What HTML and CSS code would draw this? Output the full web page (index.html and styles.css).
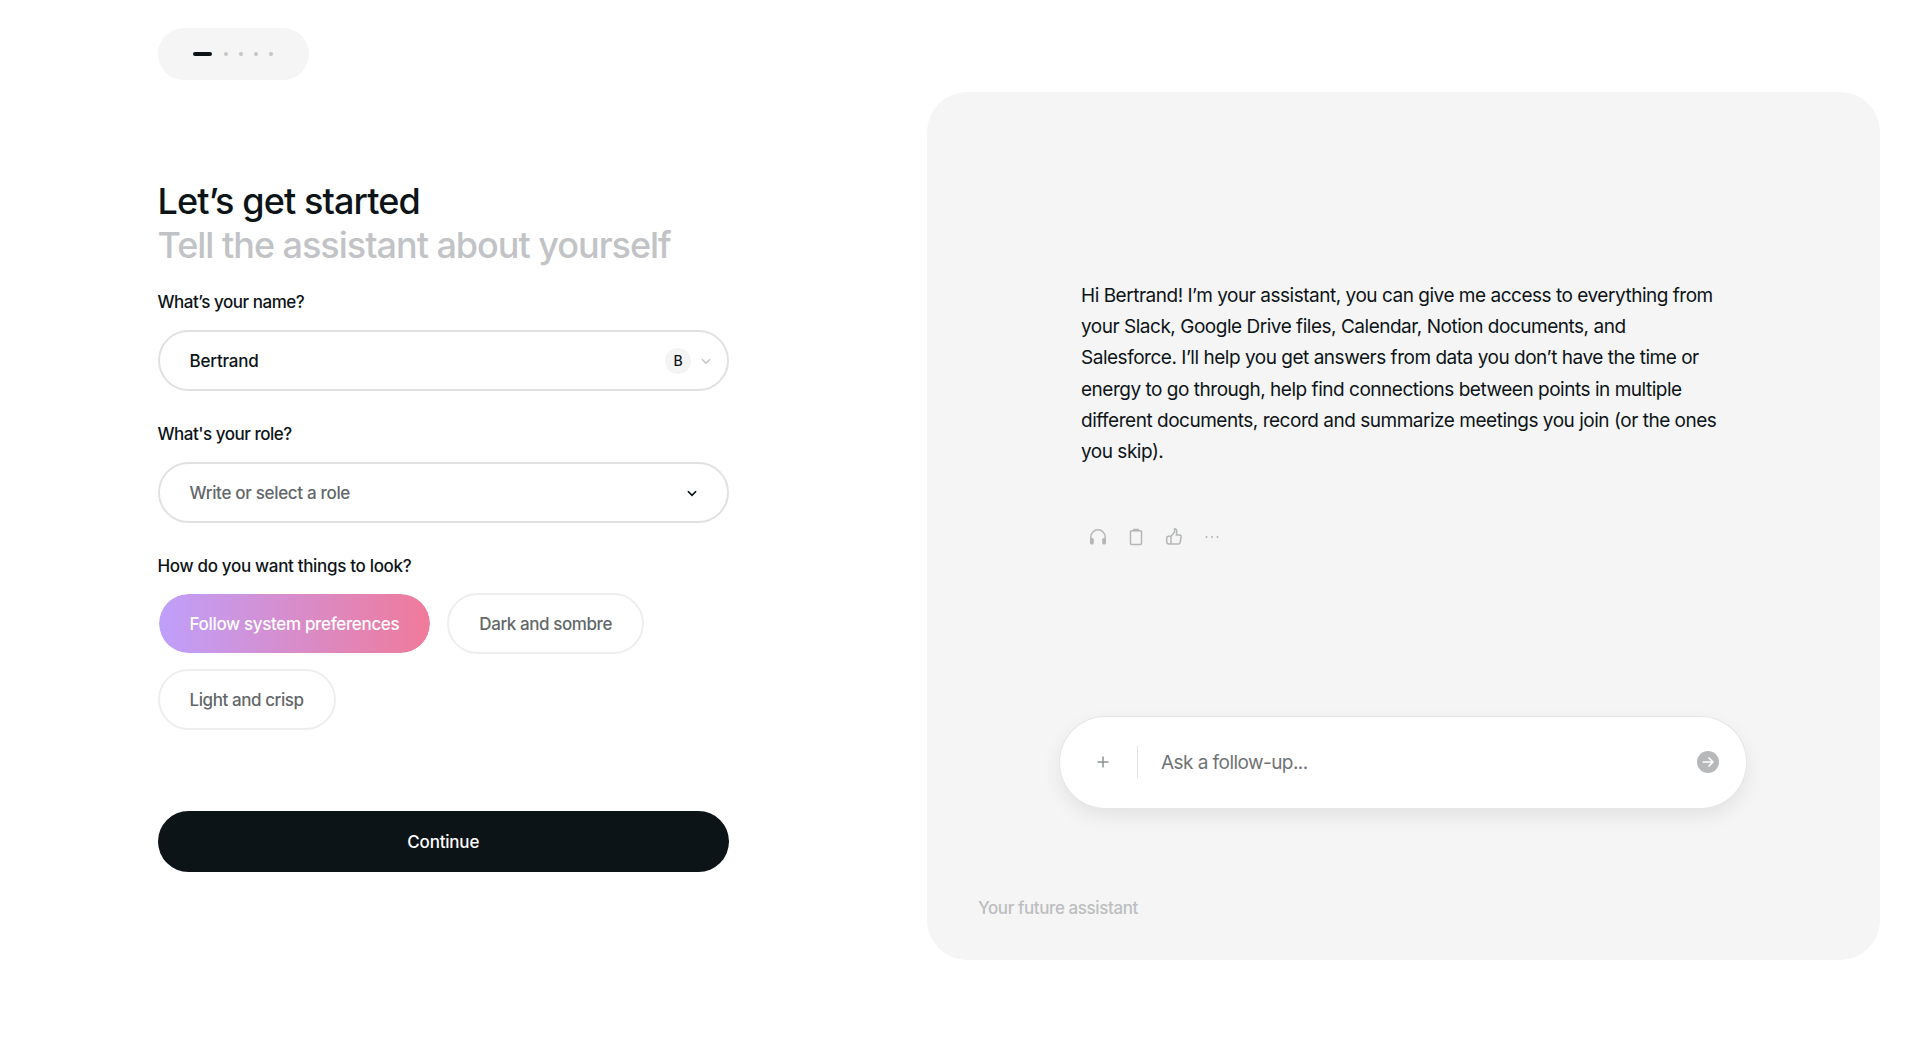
FILE: index.html
```html
<!DOCTYPE html>
<html lang="en">
<head>
<meta charset="utf-8">
<title>Let's get started</title>
<link rel="stylesheet" href="styles.css">
</head>
<body>
<main class="page">
  <section class="form-col">
    <div class="stepper">
      <span class="step-dash"></span>
      <span class="step-dot"></span>
      <span class="step-dot"></span>
      <span class="step-dot"></span>
      <span class="step-dot"></span>
    </div>
    <h1 class="title">Let’s get started</h1>
    <p class="subtitle">Tell the assistant about yourself</p>
    <label class="label label-first">What’s your name?</label>
    <div class="field">
      <span class="field-value">Bertrand</span>
      <span class="avatar">B</span>
      <svg class="chev-light" viewBox="0 0 12 12"><path d="M2.5 4.5 6 8l3.5-3.5"/></svg>
    </div>
    <label class="label">What's your role?</label>
    <div class="field field-role">
      <span class="field-placeholder">Write or select a role</span>
      <svg class="chev-dark" viewBox="0 0 12 12"><path d="M2.5 4.5 6 8l3.5-3.5"/></svg>
    </div>
    <label class="label label-look">How do you want things to look?</label>
    <div class="chips">
      <span class="chip chip-active">Follow system preferences</span>
      <span class="chip">Dark and sombre</span>
      <span class="chip">Light and crisp</span>
    </div>
    <button class="continue">Continue</button>
  </section>
  <section class="panel">
    <p class="message">Hi Bertrand! I’m your assistant, you can give me access to everything from your Slack, Google Drive files, Calendar, Notion documents, and Salesforce. I’ll help you get answers from data you don’t have the time or energy to go through, help find connections between points in multiple different documents, record and summarize meetings you join (or the ones you skip).</p>
    <div class="actions">
      <svg class="act" viewBox="0 0 20 20"><path d="M2.800 12.500V10a7.200 7.200 0 0 1 14.400 0v2.500"/><rect class="fill" x="2" y="11" width="3.800" height="6.500" rx="1.600"/><rect class="fill" x="14.200" y="11" width="3.800" height="6.500" rx="1.600"/></svg>
      <svg class="act" viewBox="0 0 20 20"><rect x="4.500" y="3.800" width="11" height="13.700" rx="1.200"/><path d="M7.800 3.800V2.400h4.400v1.400"/></svg>
      <svg class="act" viewBox="0 0 20 20"><path d="M7 9.200 10.600 5V1.800c1.400 0 2.400 1 2.200 2.600L12.400 8h3.400c.9 0 1.500.8 1.300 1.600l-1 6c-.2.800-.8 1.300-1.600 1.300H7z"/><path d="M7 9.200H4.800C3.600 9.200 2.700 10.200 2.700 11.400v3c0 1.400 1 2.500 2.300 2.500H7"/></svg>
      <svg class="act" viewBox="0 0 20 20"><circle class="fill" cx="4.500" cy="10" r="1"/><circle class="fill" cx="10" cy="10" r="1"/><circle class="fill" cx="15.500" cy="10" r="1"/></svg>
    </div>
    <div class="composer">
      <svg class="plus" viewBox="0 0 14 14"><path d="M7 1.500v11M1.500 7h11"/></svg>
      <span class="divider"></span>
      <span class="composer-text">Ask a follow-up...</span>
      <svg class="send" viewBox="0 0 22 22"><circle cx="11" cy="11" r="11"/><path d="M5.500 11h10.500M11.500 6.500 16 11l-4.500 4.500"/></svg>
    </div>
    <p class="panel-foot">Your future assistant</p>
  </section>
</main>
</body>
</html>
```
FILE: styles.css
```css
* { box-sizing: border-box; }
html, body { margin: 0; height: 100%; background: #fff; }
body { font-family: "Inter", "Liberation Sans", sans-serif; color: #0d1418; overflow: hidden; }
.page { display: flex; height: 1052px; padding-left: 157.500px; }
.form-col { width: 572px; padding-top: 28px; display: flex; flex-direction: column; align-items: flex-start; }
.stepper { width: 151.500px; height: 52px; border-radius: 26px; background: #f5f5f5; display: flex; align-items: center; gap: 11px; padding-left: 35px; }
.step-dash { width: 19px; height: 4px; border-radius: 2px; background: #0d1418; margin-right: 1px; }
.step-dot { width: 4px; height: 4px; border-radius: 50%; background: #c4c6c8; }
.title { margin: 99px 0 0; font-size: 36px; line-height: 44px; font-weight: 500; letter-spacing: -0.9px; }
.subtitle { margin: 0; font-size: 36px; line-height: 44px; font-weight: 500; letter-spacing: -1.020px; color: #c1c3c6; white-space: nowrap; }
.label { display: block; font-size: 17px; line-height: 24px; font-weight: 500; letter-spacing: -0.480px; margin-top: 31px; margin-bottom: 16px; }
.label-first { margin-top: 23px; }
.label-look { margin-bottom: 15px; letter-spacing: -0.320px; }
.field { width: 571.500px; height: 61px; border: 2px solid #e0e1e2; border-radius: 31px; display: flex; align-items: center; padding: 0 30px; font-size: 17px; letter-spacing: -0.2px; }
.field-value { flex: 1; font-weight: 500; }
.field-placeholder { flex: 1; color: #63676a; font-weight: 500; letter-spacing: -0.320px; }
.avatar { width: 26px; height: 26px; border-radius: 50%; background: #f4f4f4; font-size: 14px; font-weight: 500; display: flex; align-items: center; justify-content: center; margin-right: 8px; }
.chev-light { width: 14px; height: 14px; margin-right: -16px; fill: none; stroke: #c0c2c4; stroke-width: 1.2; }
.chev-dark { width: 14px; height: 14px; fill: none; stroke: #0d1418; stroke-width: 1.500; margin-right: -2px; }
.chips { display: flex; flex-wrap: wrap; gap: 15px 16px; width: 572px; }
.chip { height: 61px; padding: 0 30px; border: 2px solid #eeeeef; border-radius: 31px; display: flex; align-items: center; font-size: 17px; font-weight: 500; letter-spacing: -0.420px; color: #63676a; }
.chip-active { border: 1px solid #fff; padding: 0 31px; letter-spacing: -0.340px; color: #fff; background: linear-gradient(90deg, #bf9ffb, #f07a9a); background-clip: padding-box; }
.continue { margin-top: 81px; width: 571.500px; height: 61px; border: 0; border-radius: 31px; background: #0d1418; color: #fff; font: 500 17px "Inter", "Liberation Sans", sans-serif; letter-spacing: -0.2px; }
.panel { margin-left: 197.500px; margin-top: 91.500px; width: 953px; height: 868.500px; border-radius: 40px; background: #f5f5f5; padding: 188px 0 0 51px; display: flex; flex-direction: column; align-items: flex-start; }
.message { margin: 0 0 0 103px; width: 640px; font-size: 19px; line-height: 31.360px; letter-spacing: -0.480px; }
.actions { display: flex; gap: 18px; margin: 59px 0 0 110px; }
.act { width: 20px; height: 20px; fill: none; stroke: #b4b6b8; stroke-width: 1.500; }
.act .fill { fill: #b4b6b8; stroke: none; }
.composer { margin: 170px 0 0 82px; width: 686px; height: 91px; border-radius: 46px; background: #fff; box-shadow: 0 0 0 1px #e6e6e6, 0 8px 20px rgba(0,0,0,.08); display: flex; align-items: center; padding: 0 27px 0 36px; }
.plus { width: 14px; height: 14px; fill: none; stroke: #8f9294; stroke-width: 1.500; }
.divider { width: 1px; height: 32px; background: #e3e3e3; margin: 0 23px 0 27px; }
.composer-text { flex: 1; font-size: 19px; color: #707375; letter-spacing: -0.550px; }
.send { width: 22px; height: 22px; }
.send circle { fill: #b6b8ba; }
.send path { fill: none; stroke: #fff; stroke-width: 1.500; }
.panel-foot { margin: 88px 0 0; font-size: 17px; line-height: 24px; color: #bcbec0; font-weight: 500; letter-spacing: -0.4px; }
```
